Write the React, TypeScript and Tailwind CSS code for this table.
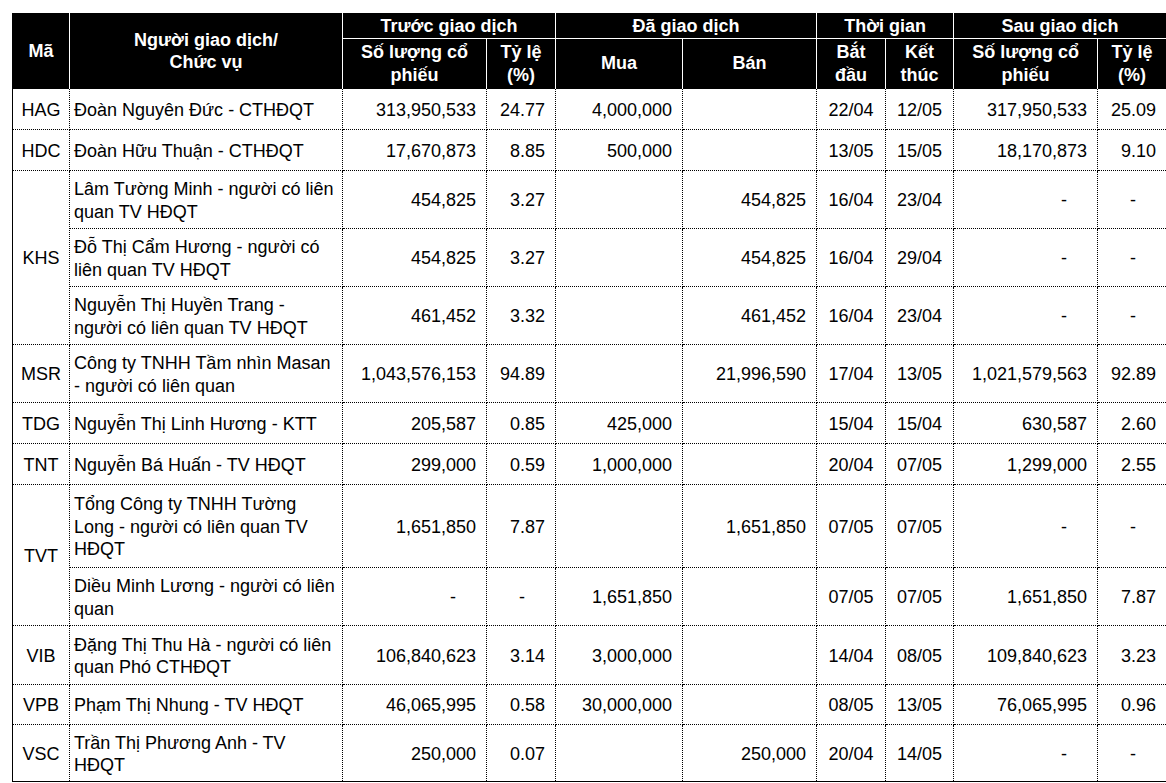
type Row = {
  ma?: string;
  span?: number;
  name: string;
  truocSl: string;
  truocTl: string;
  mua: string;
  ban: string;
  batDau: string;
  ketThuc: string;
  sauSl: string;
  sauTl: string;
  h: string;
};

const ROWS: Row[] = [
  { ma: "HAG", name: "Đoàn Nguyên Đức - CTHĐQT", truocSl: "313,950,533", truocTl: "24.77", mua: "4,000,000", ban: "", batDau: "22/04", ketThuc: "12/05", sauSl: "317,950,533", sauTl: "25.09", h: "h-[41px]" },
  { ma: "HDC", name: "Đoàn Hữu Thuận - CTHĐQT", truocSl: "17,670,873", truocTl: "8.85", mua: "500,000", ban: "", batDau: "13/05", ketThuc: "15/05", sauSl: "18,170,873", sauTl: "9.10", h: "h-[41px]" },
  { ma: "KHS", span: 3, name: "Lâm Tường Minh - người có liên quan TV HĐQT", truocSl: "454,825", truocTl: "3.27", mua: "", ban: "454,825", batDau: "16/04", ketThuc: "23/04", sauSl: "-", sauTl: "-", h: "h-[58px]" },
  { name: "Đỗ Thị Cẩm Hương - người có liên quan TV HĐQT", truocSl: "454,825", truocTl: "3.27", mua: "", ban: "454,825", batDau: "16/04", ketThuc: "29/04", sauSl: "-", sauTl: "-", h: "h-[58px]" },
  { name: "Nguyễn Thị Huyền Trang - người có liên quan TV HĐQT", truocSl: "461,452", truocTl: "3.32", mua: "", ban: "461,452", batDau: "16/04", ketThuc: "23/04", sauSl: "-", sauTl: "-", h: "h-[58px]" },
  { ma: "MSR", name: "Công ty TNHH Tầm nhìn Masan - người có liên quan", truocSl: "1,043,576,153", truocTl: "94.89", mua: "", ban: "21,996,590", batDau: "17/04", ketThuc: "13/05", sauSl: "1,021,579,563", sauTl: "92.89", h: "h-[58px]" },
  { ma: "TDG", name: "Nguyễn Thị Linh Hương - KTT", truocSl: "205,587", truocTl: "0.85", mua: "425,000", ban: "", batDau: "15/04", ketThuc: "15/04", sauSl: "630,587", sauTl: "2.60", h: "h-[41px]" },
  { ma: "TNT", name: "Nguyễn Bá Huấn - TV HĐQT", truocSl: "299,000", truocTl: "0.59", mua: "1,000,000", ban: "", batDau: "20/04", ketThuc: "07/05", sauSl: "1,299,000", sauTl: "2.55", h: "h-[41px]" },
  { ma: "TVT", span: 2, name: "Tổng Công ty TNHH Tường Long - người có liên quan TV HĐQT", truocSl: "1,651,850", truocTl: "7.87", mua: "", ban: "1,651,850", batDau: "07/05", ketThuc: "07/05", sauSl: "-", sauTl: "-", h: "h-[83px]" },
  { name: "Diều Minh Lương - người có liên quan", truocSl: "-", truocTl: "-", mua: "1,651,850", ban: "", batDau: "07/05", ketThuc: "07/05", sauSl: "1,651,850", sauTl: "7.87", h: "h-[58px]" },
  { ma: "VIB", name: "Đặng Thị Thu Hà - người có liên quan Phó CTHĐQT", truocSl: "106,840,623", truocTl: "3.14", mua: "3,000,000", ban: "", batDau: "14/04", ketThuc: "08/05", sauSl: "109,840,623", sauTl: "3.23", h: "h-[59px]" },
  { ma: "VPB", name: "Phạm Thị Nhung - TV HĐQT", truocSl: "46,065,995", truocTl: "0.58", mua: "30,000,000", ban: "", batDau: "08/05", ketThuc: "13/05", sauSl: "76,065,995", sauTl: "0.96", h: "h-[40px]" },
  { ma: "VSC", name: "Trần Thị Phương Anh - TV HĐQT", truocSl: "250,000", truocTl: "0.07", mua: "", ban: "250,000", batDau: "20/04", ketThuc: "14/05", sauSl: "-", sauTl: "-", h: "h-[57px]" },
];

const td = "border border-dotted border-black align-middle pt-[2px] pb-0";
const th = "border border-solid border-white font-bold text-center align-middle p-0";

// numbers sit right, a lone dash sits a little further in
function Num({ v }: { v: string }) {
  const pad = v === "-" ? "pr-[30px]" : "pr-[10px]";
  return <td className={`${td} text-right pl-0 ${pad}`}>{v}</td>;
}

export default function App() {
  return (
    <div className="min-h-screen bg-white pl-[12px] pt-[13px] font-['Liberation_Sans',Arial,sans-serif] text-[18px] leading-[22.5px] text-black">
      <table className="w-[1154px] table-fixed border-collapse border border-solid border-black">
        <colgroup>
          <col className="w-[57px]" />
          <col className="w-[273px]" />
          <col className="w-[144px]" />
          <col className="w-[69px]" />
          <col className="w-[127px]" />
          <col className="w-[134px]" />
          <col className="w-[69px]" />
          <col className="w-[68px]" />
          <col className="w-[144px]" />
          <col className="w-[69px]" />
        </colgroup>
        <thead className="bg-black text-white">
          <tr className="h-[25px]">
            <th rowSpan={2} className={`${th} border-l-black border-t-black border-b-0`}>
              Mã
            </th>
            <th rowSpan={2} className={`${th} border-t-black border-b-0`}>
              Người giao dịch/
              <br />
              Chức vụ
            </th>
            <th colSpan={2} className={`${th} border-t-black`}>Trước giao dịch</th>
            <th colSpan={2} className={`${th} border-t-black`}>Đã giao dịch</th>
            <th colSpan={2} className={`${th} border-t-black`}>Thời gian</th>
            <th colSpan={2} className={`${th} border-t-black border-r-black`}>Sau giao dịch</th>
          </tr>
          <tr className="h-[50px]">
            <th className={`${th} border-b-0 px-1`}>Số lượng cổ phiếu</th>
            <th className={`${th} border-b-0`}>Tỷ lệ (%)</th>
            <th className={`${th} border-b-0`}>Mua</th>
            <th className={`${th} border-b-0`}>Bán</th>
            <th className={`${th} border-b-0`}>
              Bắt
              <br />
              đầu
            </th>
            <th className={`${th} border-b-0`}>Kết thúc</th>
            <th className={`${th} border-b-0 px-1`}>Số lượng cổ phiếu</th>
            <th className={`${th} border-b-0 border-r-black`}>Tỷ lệ (%)</th>
          </tr>
        </thead>
        <tbody>
          {ROWS.map((r, i) => (
            <tr key={i} className={r.h}>
              {r.ma && (
                <td rowSpan={r.span ?? 1} className={`${td} text-center px-0`}>
                  {r.ma}
                </td>
              )}
              <td className={`${td} text-left pl-[4px] pr-[6px]`}>{r.name}</td>
              <Num v={r.truocSl} />
              <Num v={r.truocTl} />
              <Num v={r.mua} />
              <Num v={r.ban} />
              <td className={`${td} text-center px-0`}>{r.batDau}</td>
              <td className={`${td} text-center px-0`}>{r.ketThuc}</td>
              <Num v={r.sauSl} />
              <Num v={r.sauTl} />
            </tr>
          ))}
        </tbody>
      </table>
    </div>
  );
}
